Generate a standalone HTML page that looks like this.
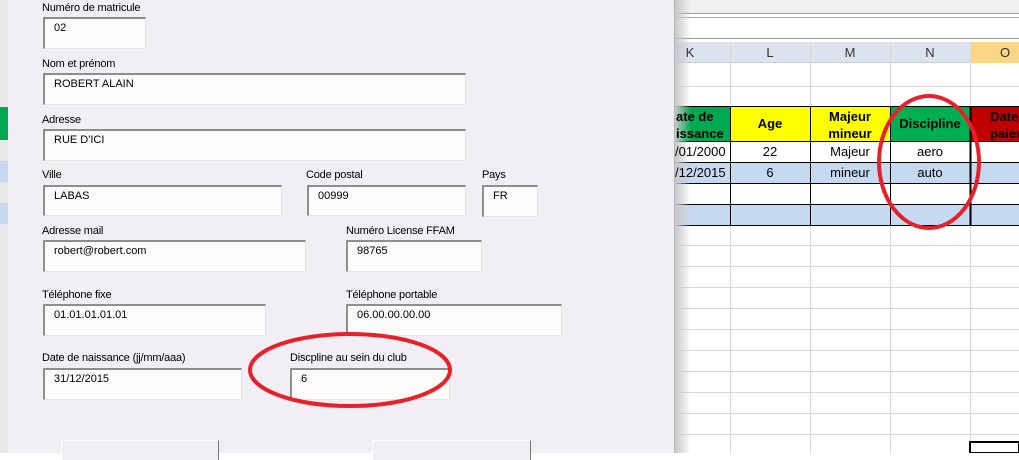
<!DOCTYPE html>
<html><head><meta charset="utf-8"><style>
*{margin:0;padding:0;box-sizing:border-box}
body{width:1019px;height:453px;position:relative;overflow:hidden;background:#fff;font-family:Tahoma,"Liberation Sans",sans-serif;font-size:11px;color:#000}
.a{position:absolute}
.dlg{left:8px;top:0;width:667px;height:453px;background:#f1eff3;border-right:1px solid #b8b8b8}
.lb{position:absolute;font-size:11px;letter-spacing:-0.2px}
.bx{position:absolute;background:#fbfcfa;border:1px solid #e2e2e2;border-top:2px solid #8e8e8e;border-left:2px solid #8e8e8e;padding:3px 0 0 9px;font-size:11px}
.btn{position:absolute;background:#f1eff3;border-left:1px solid #fff;border-top:1px solid #fff;border-right:1px solid #777;top:440px;height:20px}
.c{position:absolute;text-align:center;font-size:13px;font-family:"Liberation Sans",sans-serif}
</style></head><body>
<div class="a" style="left:0;top:0;width:8px;height:453px;background:#e8e8ea"></div>
<div class="a" style="left:0;top:107px;width:8px;height:33px;background:#00a850"></div>
<div class="a" style="left:0;top:161px;width:8px;height:21px;background:#c5d9f1"></div>
<div class="a" style="left:0;top:203px;width:8px;height:21px;background:#c5d9f1"></div>

<div class="a" style="left:675px;top:0;width:344px;height:14px;background:#f0f0f2;border-bottom:1px solid #999"></div>
<div class="a" style="left:675px;top:17px;width:344px;height:22px;background:#fff;border-top:1px solid #aaa;border-bottom:1px solid #999"></div>
<div class="a" style="left:675px;top:42px;width:344px;height:21px;background:#dde3ee;border-bottom:1px solid #c7ccd6"></div>
<div class="a" style="left:970px;top:42px;width:49px;height:21px;background:#fbd685;border-left:1px solid #f2a33a"></div>
<svg class="a" style="left:675px;top:42px" width="344" height="411">
<g stroke="#d8d8d8" stroke-width="1">
<line x1="55.5" y1="0" x2="55.5" y2="411"/><line x1="135.5" y1="0" x2="135.5" y2="411"/><line x1="215.5" y1="0" x2="215.5" y2="411"/><line x1="295.5" y1="0" x2="295.5" y2="411"/>
<line x1="0" y1="44.5" x2="344" y2="44.5"/><line x1="0" y1="64.5" x2="344" y2="64.5"/>
<line x1="0" y1="203.5" x2="344" y2="203.5"/><line x1="0" y1="224.5" x2="344" y2="224.5"/><line x1="0" y1="245.5" x2="344" y2="245.5"/><line x1="0" y1="266.5" x2="344" y2="266.5"/><line x1="0" y1="287.5" x2="344" y2="287.5"/><line x1="0" y1="308.5" x2="344" y2="308.5"/><line x1="0" y1="329.5" x2="344" y2="329.5"/><line x1="0" y1="350.5" x2="344" y2="350.5"/><line x1="0" y1="371.5" x2="344" y2="371.5"/><line x1="0" y1="392.5" x2="344" y2="392.5"/>
</g>
<rect x="0" y="65" width="55" height="34" fill="#00a850"/>
<rect x="55" y="65" width="160" height="34" fill="#ffff00"/>
<rect x="215" y="65" width="80" height="34" fill="#00b050"/>
<rect x="295" y="65" width="49" height="34" fill="#c00000"/>
<rect x="0" y="120" width="344" height="21" fill="#c5d9f1"/>
<rect x="0" y="162" width="344" height="21" fill="#c5d9f1"/>
<g stroke="#000" stroke-width="1">
<line x1="0" y1="64.5" x2="344" y2="64.5"/><line x1="0" y1="99.5" x2="344" y2="99.5"/><line x1="0" y1="120.5" x2="344" y2="120.5"/><line x1="0" y1="141.5" x2="344" y2="141.5"/><line x1="0" y1="162.5" x2="344" y2="162.5"/><line x1="0" y1="183.5" x2="344" y2="183.5"/>
<line x1="55.5" y1="64" x2="55.5" y2="184"/><line x1="135.5" y1="64" x2="135.5" y2="184"/><line x1="215.5" y1="64" x2="215.5" y2="184"/>
</g>
<line x1="295.5" y1="64" x2="295.5" y2="184" stroke="#000" stroke-width="2"/>
<rect x="295" y="400" width="49" height="11" fill="none" stroke="#000" stroke-width="2"/>
</svg>
<div class="a" style="left:675px;top:0;width:16px;height:453px;background:linear-gradient(90deg,#c8c8ca,rgba(255,255,255,0))"></div>
<div class="c" style="left:675px;top:45px;width:30px;color:#333">K</div>
<div class="c" style="left:730px;top:45px;width:80px;color:#333">L</div>
<div class="c" style="left:810px;top:45px;width:80px;color:#333">M</div>
<div class="c" style="left:890px;top:45px;width:80px;color:#333">N</div>
<div class="c" style="left:970px;top:45px;width:70px;color:#333">O</div>
<div class="c" style="left:676px;top:108px;width:54px;font-weight:bold;line-height:17px;text-align:left">ate de<br>issance</div>
<div class="c" style="left:730px;top:116px;width:80px;font-weight:bold">Age</div>
<div class="c" style="left:810px;top:108px;width:80px;font-weight:bold;line-height:17px">Majeur<br>mineur</div>
<div class="c" style="left:890px;top:116px;width:80px;font-weight:bold">Discipline</div>
<div class="c" style="left:975px;top:108px;width:60px;font-weight:bold;line-height:17px;text-align:left;padding-left:15px">Date<br>paiem</div>
<div class="c" style="left:675px;top:144px;width:55px;text-align:left">/01/2000</div>
<div class="c" style="left:730px;top:144px;width:80px">22</div>
<div class="c" style="left:810px;top:144px;width:80px">Majeur</div>
<div class="c" style="left:890px;top:144px;width:80px">aero</div>
<div class="c" style="left:675px;top:165px;width:55px;text-align:left">/12/2015</div>
<div class="c" style="left:730px;top:165px;width:80px">6</div>
<div class="c" style="left:810px;top:165px;width:80px">mineur</div>
<div class="c" style="left:890px;top:165px;width:80px">auto</div>

<div class="a dlg"></div>
<div class="lb" style="left:42px;top:2px">Numéro de matricule</div>
<div class="bx" style="left:43px;top:17px;width:103px;height:32px">02</div>
<div class="lb" style="left:42px;top:58px">Nom et prénom</div>
<div class="bx" style="left:43px;top:73px;width:423px;height:32px">ROBERT ALAIN</div>
<div class="lb" style="left:42px;top:114px">Adresse</div>
<div class="bx" style="left:43px;top:129px;width:423px;height:32px">RUE D'ICI</div>
<div class="lb" style="left:42px;top:169px">Ville</div>
<div class="bx" style="left:43px;top:185px;width:239px;height:31px">LABAS</div>
<div class="lb" style="left:306px;top:169px">Code postal</div>
<div class="bx" style="left:307px;top:185px;width:159px;height:31px">00999</div>
<div class="lb" style="left:482px;top:169px">Pays</div>
<div class="bx" style="left:482px;top:185px;width:56px;height:32px">FR</div>
<div class="lb" style="left:42px;top:225px">Adresse mail</div>
<div class="bx" style="left:43px;top:240px;width:263px;height:32px">robert@robert.com</div>
<div class="lb" style="left:346px;top:225px">Numéro License FFAM</div>
<div class="bx" style="left:346px;top:240px;width:136px;height:32px">98765</div>
<div class="lb" style="left:42px;top:289px">Téléphone fixe</div>
<div class="bx" style="left:43px;top:304px;width:223px;height:32px">01.01.01.01.01</div>
<div class="lb" style="left:346px;top:289px">Téléphone portable</div>
<div class="bx" style="left:346px;top:304px;width:216px;height:32px">06.00.00.00.00</div>
<div class="lb" style="left:42px;top:352px">Date de naissance (jj/mm/aaa)</div>
<div class="bx" style="left:43px;top:368px;width:199px;height:32px">31/12/2015</div>
<div class="lb" style="left:290px;top:352px">Discpline au sein du club</div>
<div class="bx" style="left:290px;top:368px;width:160px;height:32px">6</div>
<div class="btn" style="left:61px;width:158px"></div>
<div class="btn" style="left:372px;width:159px"></div>

<svg class="a" style="left:0;top:0" width="1019" height="453">
<ellipse cx="350" cy="370" rx="100" ry="36" fill="none" stroke="#e8202a" stroke-width="4"/>
<ellipse cx="929" cy="162" rx="50" ry="66" fill="none" stroke="#e8202a" stroke-width="4"/>
</svg>
</body></html>
